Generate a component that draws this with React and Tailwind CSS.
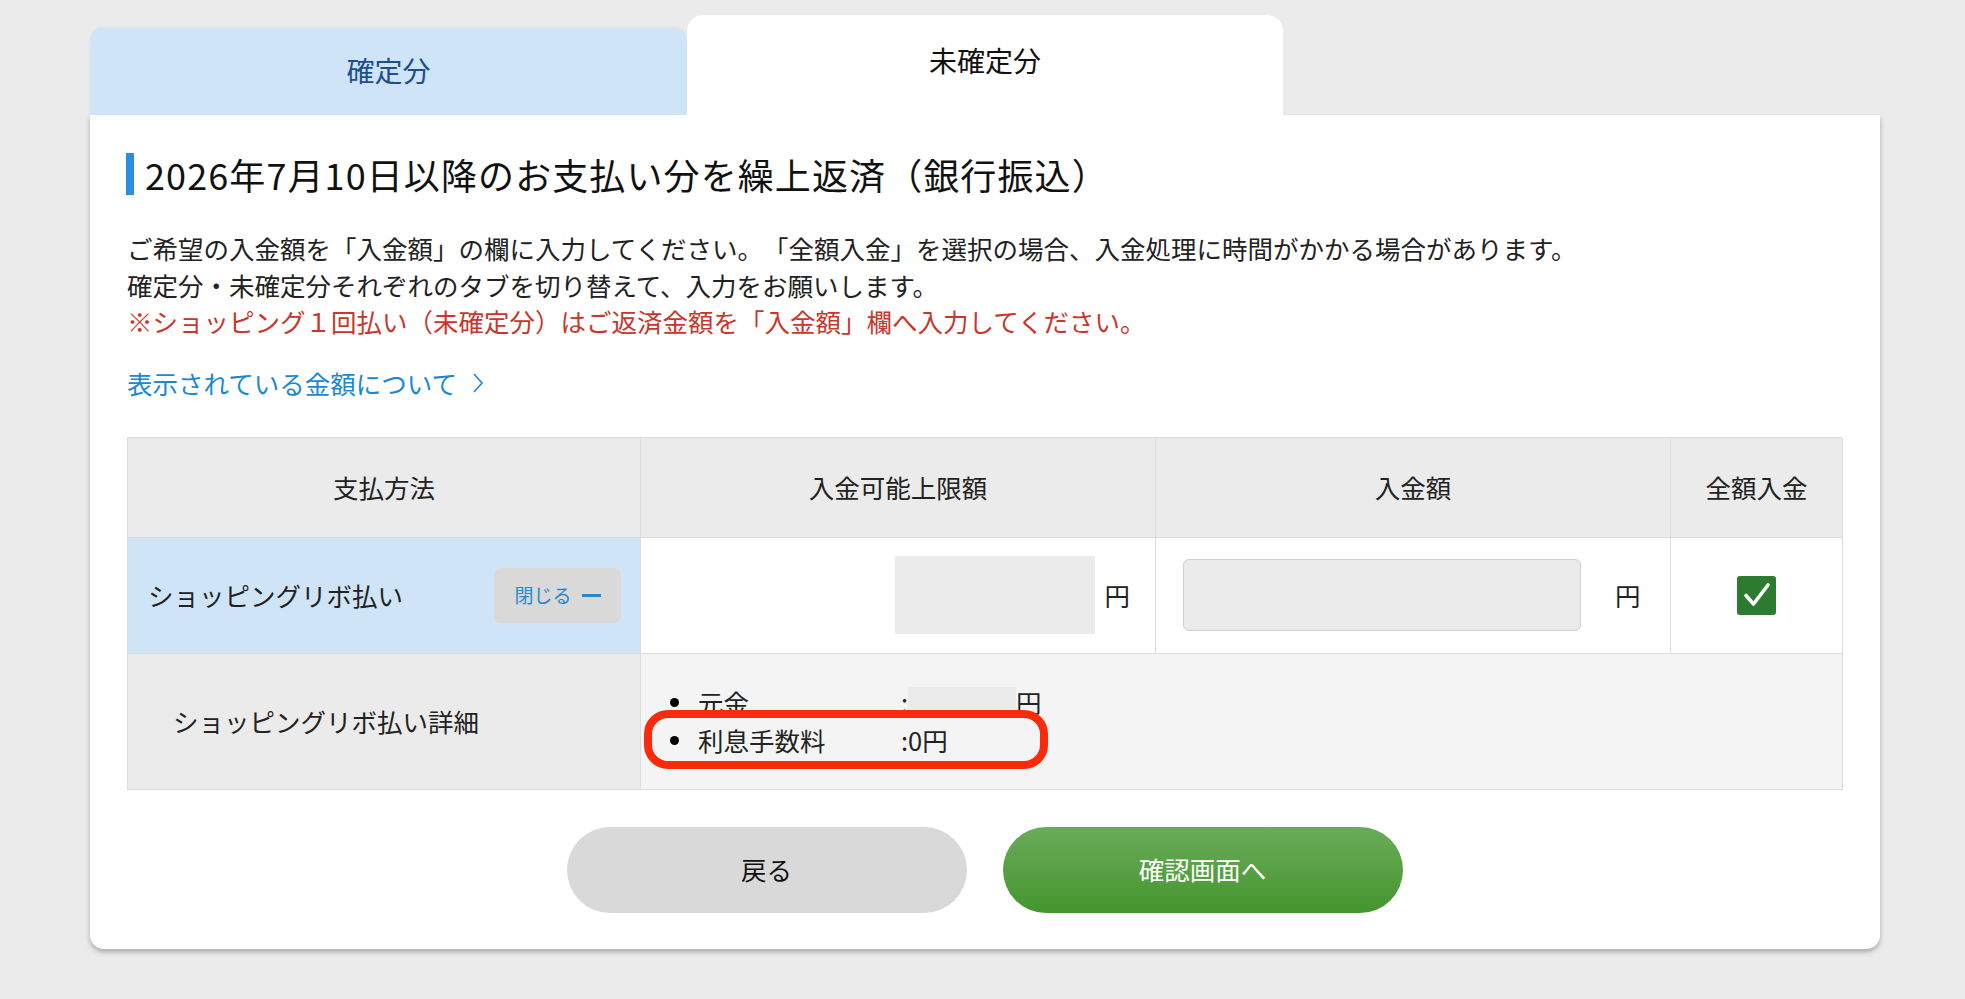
import React from 'react';

const font = "font-['Noto_Sans_CJK_JP','Noto_Sans',sans-serif]";

function CheckBox() {
  return (
    <span className="flex w-[39px] h-[39px] items-center justify-center rounded-[3px] bg-[#2d7a31]">
      <svg width="32" height="32" viewBox="0 0 32 32">
        <path d="M5 16.5 L12.5 25 L27 6" fill="none" stroke="#fff" strokeWidth="3.6" strokeLinecap="round" strokeLinejoin="round" />
      </svg>
    </span>
  );
}

export default function App() {
  return (
    <div className={`min-h-screen bg-[#ebebeb] pl-[90px] pt-[15px] pb-[52px] text-[#222] [text-spacing-trim:space-all] ${font}`}>
      {/* Tabs */}
      <div className="flex items-end">
        <div className="flex h-[87px] w-[597px] items-center justify-center rounded-t-[14px] bg-[#cfe5f7] pb-[4px] text-[28px] text-[#1d4e8f] shadow-[0_-1px_3px_rgba(0,0,0,0.06)]">
          確定分
        </div>
        <div className="flex h-[100px] w-[596px] items-center justify-center rounded-t-[16px] bg-white pb-[10px] text-[28px] text-[#111]">
          未確定分
        </div>
      </div>

      {/* Panel */}
      <div className="w-[1790px] rounded-b-[14px] bg-white pl-[37px] pr-[38px] pt-[38px] pb-[36px] shadow-[0_3px_5px_rgba(0,0,0,0.28)]">
        <div className="flex items-center">
          <span className="ml-[-1px] h-[42px] w-[8px] bg-[#2a8fe0]" />
          <h1 className="ml-[11px] text-[36px] leading-[42px] tracking-[1.1px] text-[#111]">2026年7月10日以降のお支払い分を繰上返済（銀行振込）</h1>
        </div>

        <div className="mt-[35px] text-[25.5px] leading-[36.5px]">
          <p>ご希望の入金額を「入金額」の欄に入力してください。「全額入金」を選択の場合、入金処理に時間がかかる場合があります。</p>
          <p>確定分・未確定分それぞれのタブを切り替えて、入力をお願いします。</p>
          <p className="text-[#c9362c]">※ショッピング１回払い（未確定分）はご返済金額を「入金額」欄へ入力してください。</p>
        </div>

        <a className="mt-[25px] flex items-center text-[25.5px] leading-[36px] text-[#1b88d3]">
          表示されている金額について
          <svg className="ml-[14px]" width="14" height="22" viewBox="0 0 14 22">
            <path d="M3 2 L11 11 L3 20" fill="none" stroke="#1b88d3" strokeWidth="1.6" />
          </svg>
        </a>

        {/* Table */}
        <div className="mt-[36px] grid grid-cols-[513px_515px_515px_172px] grid-rows-[100px_116px_136px] border-t border-l border-[#dcdcdc] text-[25.5px]">
          <div className="flex items-center justify-center border-r border-b border-[#dcdcdc] bg-[#ebebeb]">支払方法</div>
          <div className="flex items-center justify-center border-r border-b border-[#dcdcdc] bg-[#ebebeb]">入金可能上限額</div>
          <div className="flex items-center justify-center border-r border-b border-[#dcdcdc] bg-[#ebebeb]">入金額</div>
          <div className="flex items-center justify-center border-r border-b border-[#dcdcdc] bg-[#ebebeb]">全額入金</div>

          <div className="flex items-center justify-between border-r border-b border-[#dcdcdc] bg-[#cfe5f7] pl-[20px] pr-[19px]">
            <span>ショッピングリボ払い</span>
            <button className="flex h-[55px] w-[127px] items-center justify-center gap-[10px] rounded-[7px] bg-[#d9d9d9] text-[19px] text-[#2a86d0]">
              閉じる
              <span className="h-[3px] w-[19px] bg-[#2a86d0]" />
            </button>
          </div>
          <div className="flex items-center justify-end border-r border-b border-[#dcdcdc] bg-white pr-[25px]">
            <span className="h-[78px] w-[200px] bg-[#ebebeb]" />
            <span className="ml-[9px]">円</span>
          </div>
          <div className="flex items-center border-r border-b border-[#dcdcdc] bg-white pl-[27px]">
            <span className="h-[72px] w-[398px] rounded-[6px] border border-[#cfcfcf] bg-[#ebebeb]" />
            <span className="ml-[34px]">円</span>
          </div>
          <div className="flex items-center justify-center border-r border-b border-[#dcdcdc] bg-white">
            <CheckBox />
          </div>

          <div className="flex items-center border-r border-b border-[#dcdcdc] bg-[#ebebeb] pl-[45px]">
            ショッピングリボ払い詳細
          </div>
          <div className="relative col-span-3 flex flex-col justify-center border-r border-b border-[#dcdcdc] bg-[#f4f4f4] pl-[29px] leading-[38px]">
            <div className="flex items-center">
              <span className="h-[9px] w-[9px] rounded-full bg-black" />
              <span className="ml-[19px] w-[203px]">元金</span>
              <span>:</span>
              <span className="h-[30px] w-[108px] bg-[#ebebeb]" />
              <span>円</span>
            </div>
            <div className="flex items-center">
              <span className="h-[9px] w-[9px] rounded-full bg-black" />
              <span className="ml-[19px] w-[203px]">利息手数料</span>
              <span>:0円</span>
            </div>
            <span className="absolute left-[3px] top-[56px] h-[59px] w-[404px] rounded-[24px] border-[8px] border-[#fa2a0c]" />
          </div>
        </div>

        {/* Buttons */}
        <div className="mt-[37px] flex justify-center gap-[36px]">
          <button className="h-[86px] w-[400px] rounded-full bg-[#d9d9d9] text-[25.5px] text-[#111]">戻る</button>
          <button className="h-[86px] w-[400px] rounded-full bg-gradient-to-b from-[#6aab59] to-[#44952d] text-[25.5px] text-white">確認画面へ</button>
        </div>
      </div>
    </div>
  );
}
